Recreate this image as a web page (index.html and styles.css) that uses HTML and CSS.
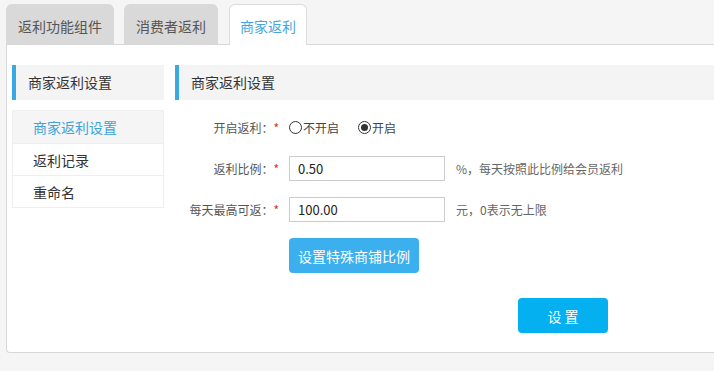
FILE: index.html
```html
<!DOCTYPE html>
<html lang="zh-CN">
<head>
<meta charset="utf-8">
<title>商家返利</title>
<link rel="stylesheet" href="styles.css">
</head>
<body>
<div class="tabs">
  <div class="tab">返利功能组件</div>
  <div class="tab">消费者返利</div>
  <div class="tab active">商家返利</div>
</div>
<div class="panel">
  <aside class="side">
    <div class="box-title">商家返利设置</div>
    <ul class="side-menu">
      <li class="current">商家返利设置</li>
      <li>返利记录</li>
      <li>重命名</li>
    </ul>
  </aside>
  <section class="main">
    <div class="box-title">商家返利设置</div>
    <div class="form">
      <div class="row">
        <div class="label">开启返利：<span class="req">*</span></div>
        <div class="ctrl">
          <span class="radio"><span class="dot"></span>不开启</span>
          <span class="radio checked"><span class="dot"></span>开启</span>
        </div>
      </div>
      <div class="row">
        <div class="label">返利比例：<span class="req">*</span></div>
        <div class="ctrl">
          <input class="text" type="text" value="0.50">
          <span class="hint">%，每天按照此比例给会员返利</span>
        </div>
      </div>
      <div class="row">
        <div class="label">每天最高可返：<span class="req">*</span></div>
        <div class="ctrl">
          <input class="text" type="text" value="100.00">
          <span class="hint">元，0表示无上限</span>
        </div>
      </div>
      <div class="btn-row">
        <button class="btn-special" type="button">设置特殊商铺比例</button>
      </div>
      <div class="submit-row">
        <button class="btn-submit" type="button">设 置</button>
      </div>
    </div>
  </section>
</div>
</body>
</html>
```
FILE: styles.css
```css
* { box-sizing: border-box; }
html, body { margin: 0; padding: 0; }
body {
  background: #f5f5f5;
  font-family: "Noto Sans CJK SC", "Noto Sans", sans-serif;
  color: #333;
  overflow: hidden;
}
.tabs {
  display: flex;
  align-items: flex-end;
  height: 44px;
  padding-left: 6px;
  gap: 10px;
}
.tab {
  height: 40px;
  padding: 4px 12px 0;
  line-height: 36px;
  font-size: 14px;
  color: #555;
  background: #d9d9d9;
  border-radius: 6px 6px 0 0;
  white-space: nowrap;
}
.tab.active {
  position: relative;
  margin-left: 1px;
  height: 41px;
  margin-bottom: -1px;
  padding: 4px 10px 0;
  background: #fff;
  color: #45a5de;
  border: 1px solid #dcdcdc;
  border-bottom: none;
  line-height: 35px;
}
.panel {
  margin-left: 6px;
  background: #fff;
  border: 1px solid #d8d8d8;
  border-right: none;
  border-radius: 0 0 0 4px;
  display: flex;
  align-items: flex-start;
  padding: 20px 0 19px 5px;
}
.side { width: 152px; flex: none; }
.main { flex: 1; margin-left: 11px; }
.box-title {
  height: 35px;
  line-height: 35px;
  background: #f4f4f4;
  border-left: 4px solid #39a9e2;
  padding-left: 12px;
  font-size: 14px;
  color: #333;
}
.side-menu {
  list-style: none;
  margin: 10px 0 0;
  padding: 0;
  border: 1px solid #eeeeee;
}
.side-menu li {
  height: 32px;
  line-height: 32px;
  padding-left: 20px;
  font-size: 14px;
  color: #333;
}
.side-menu li + li { border-top: 1px solid #eeeeee; }
.side-menu li.current { background: #f5f5f5; color: #3ea3da; }
.form { padding-top: 15px; }
.row {
  display: flex;
  align-items: center;
  height: 25px;
}
.row + .row { margin-top: 16px; }
.label {
  width: 105px;
  text-align: right;
  font-size: 12px;
  color: #555;
  padding-right: 1px;
  white-space: nowrap;
}
.req { color: #e02b2b; }
.ctrl {
  margin-left: 9px;
  display: flex;
  align-items: center;
  font-size: 12px;
  color: #555;
}
.radio {
  display: inline-flex;
  align-items: center;
  margin-right: 19px;
  color: #444;
}
.radio .dot {
  width: 13px;
  height: 13px;
  border: 1px solid #333;
  border-radius: 50%;
  margin-right: 1px;
  display: inline-flex;
  align-items: center;
  justify-content: center;
}
.radio.checked .dot::after {
  content: "";
  width: 7px;
  height: 7px;
  border-radius: 50%;
  background: #333;
}
.text {
  width: 156px;
  height: 25px;
  border: 1px solid #cccccc;
  padding: 0 8px;
  font-family: "Noto Sans CJK SC", "Noto Sans", sans-serif;
  font-size: 13px;
  color: #222;
  outline: none;
}
.hint { margin-left: 11px; color: #666; }
.btn-row { margin-top: 16px; padding-left: 114px; }
.btn-special {
  height: 35px;
  padding: 0 9px;
  border: none;
  border-radius: 4px;
  background: #3cb0ee;
  color: #fff;
  font-family: "Noto Sans CJK SC", sans-serif;
  font-size: 14px;
}
.submit-row { margin-top: 25px; padding-left: 343px; }
.btn-submit {
  width: 90px;
  height: 35px;
  border: none;
  border-radius: 4px;
  background: #04b0f0;
  color: #fff;
  font-family: "Noto Sans CJK SC", sans-serif;
  font-size: 14px;
}
```
